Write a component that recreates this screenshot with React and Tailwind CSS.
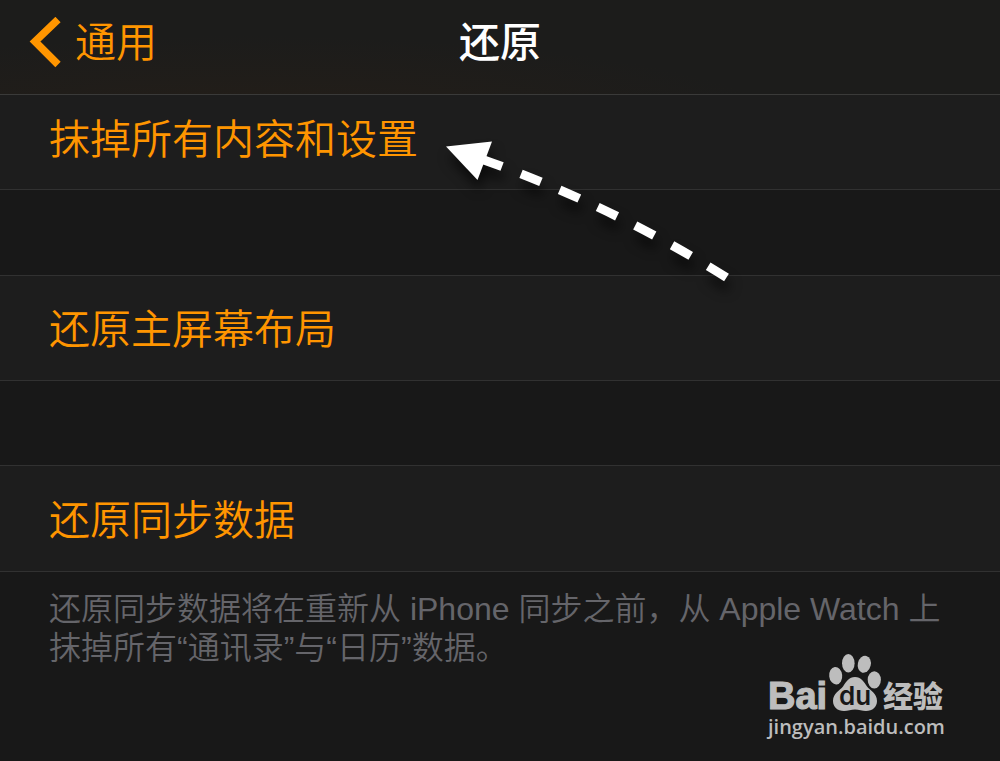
const glyph = "font-['Liberation_Sans','Noto_Sans_CJK_SC',sans-serif]";

function ResetRow({ children, className = "h-[106px]" }) {
  return (
    <li className={`flex border-b border-[#313131] bg-[#1d1d1d] ${className}`}>
      <button type="button" className="flex-1 pl-[49px] text-left text-[41px] leading-[60px] text-[#ff9500]">
        {children}
      </button>
    </li>
  );
}

function BaiduMark() {
  return (
    <div className="absolute right-[54px] bottom-[24px] w-[178px] text-[#bdbdbd]">
      <svg viewBox="0 -4 178 68" className="block h-[68px] w-[178px]" fill="currentColor" role="img" aria-label="Baidu 经验">
        <text x="0" y="52" fontFamily="Liberation Sans, sans-serif" fontWeight="700" fontSize="38" stroke="currentColor" strokeWidth="1.200">Bai</text>
        <ellipse cx="67.700" cy="18.700" rx="6.500" ry="8.800" transform="rotate(-6 67.700 18.700)" />
        <ellipse cx="80.300" cy="6.300" rx="6.300" ry="9.200" />
        <ellipse cx="96.300" cy="7.300" rx="6.500" ry="8.600" transform="rotate(14 96.300 7.300)" />
        <ellipse cx="106.300" cy="22.800" rx="6.600" ry="8.600" />
        <path d="M87 20C81 20 78 25 75 29.500C72 33.500 65 36 65 44C65 50 69.500 54 76 54C80 54 83 52.500 87 52.500S94 54 98 54C104.500 54 109 50 109 44C109 36 102 33.500 99 29.500C96 25 93 20 87 20Z" />
        <text x="71" y="48" fontFamily="Inter, sans-serif" fontWeight="600" fontSize="26" fill="#181818">du</text>
        <text x="115" y="50" fontFamily="Noto Sans CJK SC, sans-serif" fontWeight="900" fontSize="30">经验</text>
      </svg>
      <p className="-mt-1 font-['Open_Sans',sans-serif] text-[20px] leading-[20px] font-semibold">jingyan.baidu.com</p>
    </div>
  );
}

export default function App() {
  return (
    <div className={`relative flex min-h-screen flex-col bg-[#181818] font-[350] ${glyph}`}>
      <header className="grid h-[95px] grid-cols-[1fr_auto_1fr] items-center border-b border-[#3a3a39] bg-[#1c1c1b] bg-[radial-gradient(ellipse_at_25%_130%,#241e18_0%,#1c1c1b_50%)] pb-2">
        <a href="#general" className="flex items-center gap-[14px] pl-[29px] text-[41px] leading-[60px] text-[#ff9500]">
          <svg width="32" height="52" viewBox="0 0 32 52" fill="none" stroke="currentColor" strokeWidth="7.500" aria-hidden="true">
            <path d="M29 2.500 6 24.500 29 47.500" />
          </svg>
          通用
        </a>
        <h1 className="text-[41px] leading-[60px] font-medium text-white">还原</h1>
      </header>

      <main>
        <ul className="flex flex-col">
          <ResetRow className="h-[95px] pb-1">抹掉所有内容和设置</ResetRow>
          <li className="h-[85px]" aria-hidden="true" />
          <ResetRow className="h-[106px] border-t pt-1">还原主屏幕布局</ResetRow>
          <li className="h-[84px]" aria-hidden="true" />
          <ResetRow className="h-[107px] border-t pt-1">还原同步数据</ResetRow>
        </ul>
        <p className="pt-[18px] pr-12 pl-[49px] text-[32px] leading-[39px] text-[#65656a]">
          还原同步数据将在重新从 iPhone 同步之前，从 Apple Watch 上抹掉所有“通讯录”与“日历”数据。
        </p>
      </main>

      <svg className="absolute top-[130px] left-[435px] h-[170px] w-[310px] drop-shadow-[2px_10px_6px_rgba(0,0,0,0.6)]" viewBox="435 130 310 170" aria-hidden="true">
        <path d="M446 146.500 492 141.500 477.500 180Z" fill="#fff" />
        <path d="M726.500 277.500Q611 205 480 158.500" fill="none" stroke="#fff" strokeWidth="9" strokeDasharray="21.500 20.300" />
      </svg>

      <BaiduMark />
    </div>
  );
}
